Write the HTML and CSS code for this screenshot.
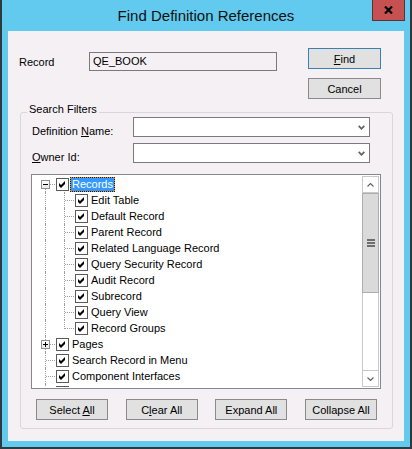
FILE: index.html
```html
<!DOCTYPE html>
<html lang="en">
<head>
<meta charset="utf-8">
<title>Find Definition References</title>
<link rel="stylesheet" href="styles.css">
</head>
<body>
<div class="window">
  <div class="titlebar">
    <span></span>
    <div class="caption">Find Definition References</div>
    <button class="close" aria-label="Close">
      <svg width="9" height="8" viewBox="0 0 9 8"><path d="M1 0.5 L8 7.5 M8 0.5 L1 7.5" stroke="#000" stroke-width="2.2" fill="none"/></svg>
    </button>
  </div>

  <div class="client">
    <div class="top">
      <div class="record-field">
        <span class="record-lbl">Record</span>
        <div class="textbox">QE_BOOK</div>
      </div>
      <div class="actions">
        <button class="btn btn-default"><u>F</u>ind</button>
        <button class="btn">Cancel</button>
      </div>
    </div>

    <div class="group">
      <span class="group-title">Search Filters</span>

      <div class="filter">
        <span class="filter-lbl">Definition <u>N</u>ame:</span>
        <div class="combo"><svg class="chev" width="7" height="5" viewBox="0 0 7 5"><polyline points="0.7,0.8 3.5,3.8 6.3,0.8" stroke="#606060" stroke-width="1.7" fill="none"/></svg></div>
      </div>
      <div class="filter">
        <span class="filter-lbl"><u>O</u>wner Id:</span>
        <div class="combo"><svg class="chev" width="7" height="5" viewBox="0 0 7 5"><polyline points="0.7,0.8 3.5,3.8 6.3,0.8" stroke="#606060" stroke-width="1.7" fill="none"/></svg></div>
      </div>

      <div class="tree">
        <ul class="tree-list">
          <li class="row"><span class="g g-first"><span class="exp"></span></span><span class="cb"><svg viewBox="0 0 11 11"><polygon points="2,4 4,6 8,2 8,5 4,9 2,7"/></svg></span><span class="label sel">Records</span></li>
          <li class="row"><span class="g g-line"></span><span class="g g-tee"></span><span class="cb"><svg viewBox="0 0 11 11"><polygon points="2,4 4,6 8,2 8,5 4,9 2,7"/></svg></span><span class="label">Edit Table</span></li>
          <li class="row"><span class="g g-line"></span><span class="g g-tee"></span><span class="cb"><svg viewBox="0 0 11 11"><polygon points="2,4 4,6 8,2 8,5 4,9 2,7"/></svg></span><span class="label">Default Record</span></li>
          <li class="row"><span class="g g-line"></span><span class="g g-tee"></span><span class="cb"><svg viewBox="0 0 11 11"><polygon points="2,4 4,6 8,2 8,5 4,9 2,7"/></svg></span><span class="label">Parent Record</span></li>
          <li class="row"><span class="g g-line"></span><span class="g g-tee"></span><span class="cb"><svg viewBox="0 0 11 11"><polygon points="2,4 4,6 8,2 8,5 4,9 2,7"/></svg></span><span class="label">Related Language Record</span></li>
          <li class="row"><span class="g g-line"></span><span class="g g-tee"></span><span class="cb"><svg viewBox="0 0 11 11"><polygon points="2,4 4,6 8,2 8,5 4,9 2,7"/></svg></span><span class="label">Query Security Record</span></li>
          <li class="row"><span class="g g-line"></span><span class="g g-tee"></span><span class="cb"><svg viewBox="0 0 11 11"><polygon points="2,4 4,6 8,2 8,5 4,9 2,7"/></svg></span><span class="label">Audit Record</span></li>
          <li class="row"><span class="g g-line"></span><span class="g g-tee"></span><span class="cb"><svg viewBox="0 0 11 11"><polygon points="2,4 4,6 8,2 8,5 4,9 2,7"/></svg></span><span class="label">Subrecord</span></li>
          <li class="row"><span class="g g-line"></span><span class="g g-tee"></span><span class="cb"><svg viewBox="0 0 11 11"><polygon points="2,4 4,6 8,2 8,5 4,9 2,7"/></svg></span><span class="label">Query View</span></li>
          <li class="row"><span class="g g-line"></span><span class="g g-end"></span><span class="cb"><svg viewBox="0 0 11 11"><polygon points="2,4 4,6 8,2 8,5 4,9 2,7"/></svg></span><span class="label">Record Groups</span></li>
          <li class="row"><span class="g g-tee"><span class="exp exp-plus"></span></span><span class="cb"><svg viewBox="0 0 11 11"><polygon points="2,4 4,6 8,2 8,5 4,9 2,7"/></svg></span><span class="label">Pages</span></li>
          <li class="row"><span class="g g-tee"></span><span class="cb"><svg viewBox="0 0 11 11"><polygon points="2,4 4,6 8,2 8,5 4,9 2,7"/></svg></span><span class="label">Search Record in Menu</span></li>
          <li class="row"><span class="g g-tee"></span><span class="cb"><svg viewBox="0 0 11 11"><polygon points="2,4 4,6 8,2 8,5 4,9 2,7"/></svg></span><span class="label">Component Interfaces</span></li>
          <li class="row"><span class="g g-tee"></span><span class="cb"><svg viewBox="0 0 11 11"><polygon points="2,4 4,6 8,2 8,5 4,9 2,7"/></svg></span></li>
        </ul>
        <div class="scrollbar">
          <div class="sb-arrow sb-up"><svg width="7" height="4" viewBox="0 0 7 4"><polyline points="0.5,3.5 3.5,0.5 6.5,3.5" stroke="#606060" stroke-width="1.1" fill="none"/></svg></div>
          <div class="sb-thumb"><span class="grip"></span></div>
          <div class="sb-track"></div>
          <div class="sb-arrow sb-down"><svg width="7" height="4" viewBox="0 0 7 4"><polyline points="0.5,0.5 3.5,3.5 6.5,0.5" stroke="#606060" stroke-width="1.1" fill="none"/></svg></div>
        </div>
      </div>

      <div class="tree-actions">
        <button class="btn btn-wide">Select <u>A</u>ll</button>
        <button class="btn btn-wide">C<u>l</u>ear All</button>
        <button class="btn btn-wide">Expand All</button>
        <button class="btn btn-wide">Collapse All</button>
      </div>
    </div>
  </div>
</div>
</body>
</html>
```

FILE: styles.css
```css
html, body {
  margin: 0;
  padding: 0;
}

body {
  font: 11px "Liberation Sans", Arial, sans-serif;
  color: #000;
  background: #fff;
}

u {
  text-decoration: underline;
  text-underline-offset: 1px;
}

/* window frame */
.window {
  width: 412px;
  height: 449px;
  box-sizing: border-box;
  background: #62caee;
  border: 2px solid #2e3a40;
  border-top: 0;
  display: flex;
  flex-direction: column;
}

.titlebar {
  height: 31px;
  flex: none;
  display: grid;
  grid-template-columns: 1fr auto 1fr;
  align-items: start;
}

.caption {
  font-size: 15px;
  line-height: 31px;
  white-space: nowrap;
  color: #111;
}

.close {
  justify-self: end;
  margin-right: 5px;
  width: 33px;
  height: 21px;
  box-sizing: border-box;
  padding: 0;
  border: 1px solid #5a3434;
  border-top: 0;
  background: #c75050;
  display: flex;
  align-items: center;
  justify-content: center;
}

.client {
  margin: 0 6px 6px;
  height: 410px;
  box-sizing: border-box;
  background: #f4f0f4;
}

/* record row + dialog buttons */
.top {
  display: flex;
  padding: 17px 0 0 11px;
}

.record-field {
  display: flex;
  align-items: center;
  margin-top: 4px;
  height: 19px;
}

.record-lbl {
  width: 70px;
}

.textbox {
  width: 188px;
  height: 19px;
  box-sizing: border-box;
  border: 1px solid #7a7a7a;
  padding-left: 3px;
  line-height: 17px;
}

.actions {
  margin-left: 31px;
  display: flex;
  flex-direction: column;
  gap: 9px;
}

.btn {
  width: 73px;
  height: 21px;
  box-sizing: border-box;
  border: 1px solid #8a8a8a;
  background: #e1e1e1;
  font: inherit;
  color: #000;
  padding: 0;
  margin: 0;
}

.btn-default {
  border-color: #3c7fb1;
}

.btn-wide {
  width: 72px;
}

/* search filters group */
.group {
  position: relative;
  margin: 13px 0 0 12px;
  width: 373px;
  height: 317px;
  box-sizing: border-box;
  border: 1px solid #d8d8dc;
  border-radius: 3px;
  padding: 4px 10px 0 10px;
}

.group-title {
  position: absolute;
  top: -10px;
  left: 6px;
  padding: 0 2px;
  line-height: 13px;
  background: #f4f0f4;
}

.filter {
  display: flex;
  margin-left: 1px;
  height: 20px;
}

.filter + .filter {
  margin-top: 6px;
}

.filter-lbl {
  width: 101px;
  line-height: 13px;
  margin-top: 8px;
}

.combo {
  width: 237px;
  height: 20px;
  box-sizing: border-box;
  border: 1px solid #7a7a7a;
  background: #fff;
  display: flex;
  align-items: center;
  justify-content: flex-end;
  padding-right: 4px;
}

/* tree view */
.tree {
  margin-top: 11px;
  width: 350px;
  height: 215px;
  box-sizing: border-box;
  border: 1px solid #828790;
  background: #fff;
  padding: 1px;
  display: flex;
}

.tree-list {
  flex: 1;
  margin: 0;
  padding: 0 0 0 3px;
  list-style: none;
  overflow: hidden;
}

.row {
  display: flex;
  align-items: flex-start;
  height: 16px;
  white-space: nowrap;
}

.g {
  position: relative;
  flex: none;
  width: 19px;
  height: 16px;
}

.g::before,
.g::after {
  content: "";
  position: absolute;
}

.g-line::before,
.g-tee::before {
  left: 9px;
  top: 0;
  bottom: 0;
  border-left: 1px dotted #a0a0a0;
}

.g-end::before {
  left: 9px;
  top: 0;
  height: 9px;
  border-left: 1px dotted #a0a0a0;
}

.g-first::before {
  left: 9px;
  top: 8px;
  bottom: 0;
  border-left: 1px dotted #a0a0a0;
}

.g-tee::after,
.g-end::after,
.g-first::after {
  left: 10px;
  right: 0;
  top: 8px;
  border-top: 1px dotted #a0a0a0;
}

.g-line::after {
  display: none;
}

/* expand / collapse box */
.exp {
  position: absolute;
  z-index: 1;
  left: 5px;
  top: 4px;
  width: 9px;
  height: 9px;
  box-sizing: border-box;
  border: 1px solid #919191;
  background: linear-gradient(#ffffff, #e8e8e8);
}

.exp::before {
  content: "";
  position: absolute;
  left: 1px;
  top: 3px;
  width: 5px;
  height: 1px;
  background: #000;
}

.exp-plus::after {
  content: "";
  position: absolute;
  left: 3px;
  top: 1px;
  width: 1px;
  height: 5px;
  background: #000;
}

.cb {
  flex: none;
  width: 13px;
  height: 13px;
  box-sizing: border-box;
  margin: 2px 0 0 1px;
  border: 1px solid #5a5a5a;
  background: #fff;
  display: flex;
}

.cb svg {
  width: 11px;
  height: 11px;
  fill: #000;
}

.label {
  margin: 1px 0 0 1px;
  padding: 0 1px;
  border: 1px solid transparent;
  line-height: 13px;
}

.label.sel {
  color: #fff;
  border: 1px dotted #1a1a1a;
  background: linear-gradient(#3399ff, #3399ff) padding-box, #e8922e;
}

/* vertical scroll bar */
.scrollbar {
  flex: none;
  width: 17px;
  box-sizing: border-box;
  border: 1px solid #c8c8c8;
  background: #fff;
  display: flex;
  flex-direction: column;
}

.sb-arrow {
  flex: none;
  height: 16px;
  box-sizing: border-box;
  display: flex;
  align-items: center;
  justify-content: center;
}

.sb-up {
  border-bottom: 1px solid #c8c8c8;
}

.sb-down {
  border-top: 1px solid #c8c8c8;
}

.sb-thumb {
  flex: none;
  height: 100px;
  box-sizing: border-box;
  margin: 0 -1px;
  border: 1px solid #adadad;
  background: #dadada;
  display: flex;
  align-items: center;
  justify-content: center;
}

.grip {
  width: 8px;
  height: 8px;
  background: repeating-linear-gradient(#6e6e6e 0 2px, transparent 2px 3px);
}

.sb-track {
  flex: 1;
}

.tree-actions {
  display: flex;
  justify-content: space-between;
  width: 341px;
  margin: 10px 0 0 5px;
}
```
